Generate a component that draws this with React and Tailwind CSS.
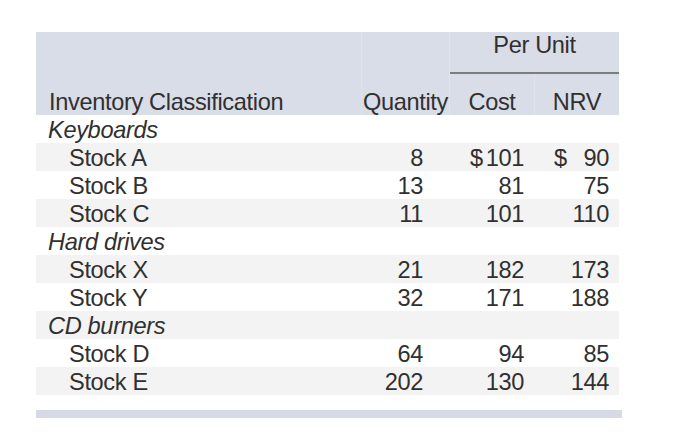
import React from "react";

const rows = [
  { cat: "Keyboards" },
  { name: "Stock A", q: "8", c: "101", n: "90", dollar: true },
  { name: "Stock B", q: "13", c: "81", n: "75" },
  { name: "Stock C", q: "11", c: "101", n: "110" },
  { cat: "Hard drives" },
  { name: "Stock X", q: "21", c: "182", n: "173" },
  { name: "Stock Y", q: "32", c: "171", n: "188" },
  { cat: "CD burners" },
  { name: "Stock D", q: "64", c: "94", n: "85" },
  { name: "Stock E", q: "202", c: "130", n: "144" },
];

export default function App() {
  return (
    <div
      className="w-[700px] h-[443px] bg-white text-[#303030] text-[23.6px] tracking-[-0.35px]"
      style={{ fontFamily: '"Liberation Sans", Arial, sans-serif' }}
    >
      <div className="pt-[32px] pl-[36px] w-[619px]">
        {/* header */}
        <div className="bg-[#d9dde8] h-[83px] flex flex-col">
          <div className="grid grid-cols-[326px_88px_85px_84px] h-[42px]">
            <div className="border-r border-[#dfe2ec]" />
            <div className="border-r border-[#dfe2ec]" />
            <div className="col-span-2 flex flex-col justify-between">
              <div className="leading-[24px] text-center pt-[1px]">Per Unit</div>
              <div className="h-[2px] bg-[#7d7d7d]" />
            </div>
          </div>
          <div className="grid grid-cols-[326px_88px_85px_84px] h-[41px] leading-[24px]">
            <div className="pl-[13px] pt-[16px] border-r border-[#dfe2ec]">Inventory Classification</div>
            <div className="pt-[16px] text-center whitespace-nowrap border-r border-[#dfe2ec]">Quantity</div>
            <div className="pt-[16px] text-center border-r border-[#dfe2ec]">Cost</div>
            <div className="pt-[16px] text-center">NRV</div>
          </div>
        </div>
        {/* body */}
        <div className="flex flex-col">
          {rows.map((r, i) => (
            <div
              key={i}
              className={`grid grid-cols-[326px_88px_85px_84px] h-[28px] leading-[30px] ${
                i % 2 === 1 ? "bg-[#f3f3f3]" : "bg-white"
              }`}
            >
              {r.cat ? (
                <div className="pl-[12px] italic col-span-4">{r.cat}</div>
              ) : (
                <>
                  <div className="pl-[33px]">{r.name}</div>
                  <div className="text-right pr-[27px]">{r.q}</div>
                  <div className="flex justify-between pl-[20px] pr-[11px]">
                    <span>{r.dollar ? "$" : ""}</span>
                    <span>{r.c}</span>
                  </div>
                  <div className="flex justify-between pl-[19px] pr-[10px]">
                    <span>{r.dollar ? "$" : ""}</span>
                    <span>{r.n}</span>
                  </div>
                </>
              )}
            </div>
          ))}
        </div>
        <div className="mt-[15px] h-[8px] bg-[#d6dae6] w-[586px]" />
      </div>
    </div>
  );
}
